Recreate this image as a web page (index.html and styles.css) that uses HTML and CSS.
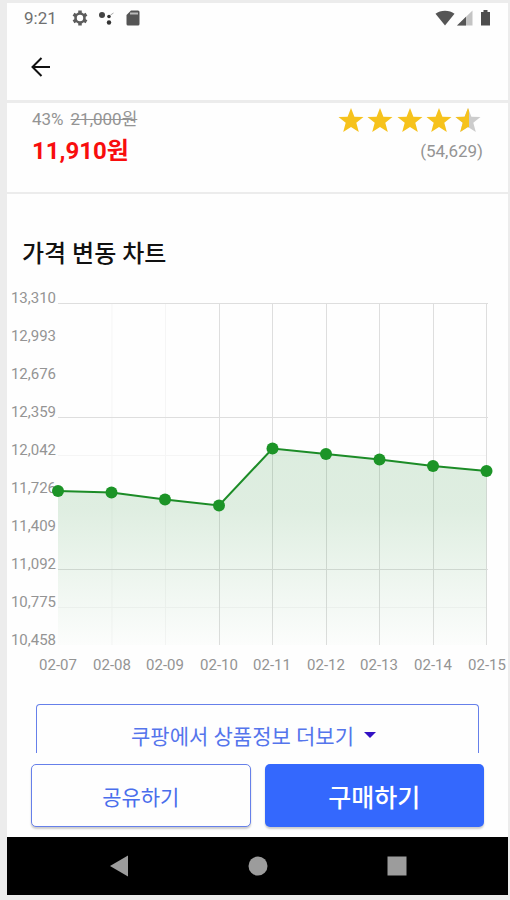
FILE: index.html
```html
<!DOCTYPE html>
<html lang="ko">
  <head>
    <meta charset="utf-8">
    <meta name="viewport" content="width=device-width, initial-scale=1">
    <title>가격 변동 차트</title>
    <link rel="stylesheet" href="styles.css">
  </head>
  <body>
    <div class="screen">
      <div class="status-bar">
        <span>9:21</span>
        <svg class="status-gear" width="18" height="18" viewBox="0 0 18 18">
          <path d="M9 1.500v3M9 13.500v3M2.500 5.250l2.600 1.500M12.900 11.250l2.600 1.500M2.500 12.750l2.600-1.500M12.900 6.750l2.600-1.500" stroke="#5c5c5c" stroke-width="3.500" />
          <circle cx="9" cy="9" r="4.500" fill="#fff" stroke="#5c5c5c" stroke-width="2.600" />
        </svg>
        <svg class="status-dots" width="18" height="18" viewBox="0 0 18 18">
          <circle cx="5" cy="6" r="3" fill="#444" />
          <circle cx="12" cy="7.500" r="1.800" fill="#333" />
          <circle cx="12" cy="13.500" r="2.200" fill="#333" />
          <path d="M13.500 6l3-2" stroke="#aaa" />
        </svg>
        <svg class="status-card" width="14" height="18" viewBox="0 0 14 18">
          <path d="M5 1.500h7A1.500 1.500 0 0 1 13.500 3v12a1.500 1.500 0 0 1-1.500 1.500H2A1.500 1.500 0 0 1 .5 15V6z" fill="#555" />
          <path d="M4 4.500h8" stroke="#bbb" stroke-width="2" />
        </svg>
        <svg class="status-right" width="56" height="18" viewBox="0 0 56 18">
          <path d="M10 16.500L.5 4.800C5.500.8 14.500.8 19.500 4.800z" fill="#555" />
          <path d="M37.500 1.500v15H22z" fill="#c4c4c4" />
          <path d="M31 7.800v8.700h-9z" fill="#555" />
          <path d="M48.500 1h4v2H55v13.500h-9V3h2.500z" fill="#4d4d4d" />
        </svg>
      </div>

      <header class="app-bar">
        <button class="back-button" type="button" aria-label="뒤로">
          <svg width="22" height="22" viewBox="0 0 22 22">
            <path d="M20 11H3M11.500 2L2.500 11l9 9" fill="none" stroke="#111" stroke-width="2" />
          </svg>
        </button>
      </header>

      <main class="content">
        <section class="summary">
          <div class="price">
            <div class="price-before"><span>43%</span><del>21,000원</del></div>
            <div class="price-now">11,910원</div>
          </div>
          <div class="rating">
            <svg class="stars" width="145" height="27" viewBox="0 0 145 27">
              <defs>
                <path id="star" d="M13 1l3.400 8.700 9.100.4-7.200 5.700 2.500 9.200L13 19.900l-7.800 5.100 2.500-9.200L.5 10.100l9.100-.4z" />
                <clipPath id="half"><rect width="14" height="27" /></clipPath>
              </defs>
              <g fill="#f6c21c">
                <use href="#star" />
                <use href="#star" x="29" />
                <use href="#star" x="59" />
                <use href="#star" x="88" />
              </g>
              <g transform="translate(117 0)">
                <use href="#star" fill="#ccc" />
                <use href="#star" fill="#f6c21c" clip-path="url(#half)" />
              </g>
            </svg>
            <div class="rating-count">(54,629)</div>
          </div>
        </section>

        <section class="chart-section">
          <h2 class="chart-title">가격 변동 차트</h2>
          <svg class="chart" viewBox="0 0 501 390">
            <defs>
              <linearGradient id="area" x1="0" y1="0" x2="0" y2="1">
                <stop offset="0" stop-color="#1e8a2e" stop-opacity="0.15" />
                <stop offset="0.3" stop-color="#1e8a2e" stop-opacity="0.14" />
                <stop offset="1" stop-color="#1e8a2e" stop-opacity="0.01" />
              </linearGradient>
            </defs>
            <g class="grid-faint">
              <path d="M51 171.500H480M51 323.500H480M105 19V361M158.500 19V361" />
            </g>
            <g class="grid">
              <path d="M51 19.500H481M51 133.500H481M51 285.500H481" />
              <path d="M212.500 19V361M265.500 19V361M319.500 19V361M372.500 19V361M426.500 19V361M479.500 19V361" />
            </g>
            <g class="axis-y">
              <text x="49" y="19">13,310</text>
              <text x="49" y="57">12,993</text>
              <text x="49" y="95">12,676</text>
              <text x="49" y="133">12,359</text>
              <text x="49" y="171">12,042</text>
              <text x="49" y="209">11,726</text>
              <text x="49" y="247">11,409</text>
              <text x="49" y="285">11,092</text>
              <text x="49" y="323">10,775</text>
              <text x="49" y="361">10,458</text>
            </g>
            <path fill="url(#area)" d="M51 207L104.500 208.500 158 215.500 212 221.500 265.500 164.500 319 170 372.500 175.500 426 182 479.500 187V361H51z" />
            <polyline class="line" points="51,207 104.500,208.500 158,215.500 212,221.500 265.500,164.500 319,170 372.500,175.500 426,182 479.500,187" />
            <g fill="#1c9427">
              <circle cx="51" cy="207" r="6" />
              <circle cx="104.500" cy="208.500" r="6" />
              <circle cx="158" cy="215.500" r="6" />
              <circle cx="212" cy="221.500" r="6" />
              <circle cx="265.500" cy="164.500" r="6" />
              <circle cx="319" cy="170" r="6" />
              <circle cx="372.500" cy="175.500" r="6" />
              <circle cx="426" cy="182" r="6" />
              <circle cx="479.500" cy="187" r="6" />
            </g>
            <g class="axis-x">
              <text x="51" y="386">02-07</text>
              <text x="105" y="386">02-08</text>
              <text x="158" y="386">02-09</text>
              <text x="212" y="386">02-10</text>
              <text x="265" y="386">02-11</text>
              <text x="319" y="386">02-12</text>
              <text x="372" y="386">02-13</text>
              <text x="426" y="386">02-14</text>
              <text x="480" y="386">02-15</text>
            </g>
          </svg>
        </section>

        <button class="more-button" type="button">
          쿠팡에서 상품정보 더보기
          <svg width="12" height="6" viewBox="0 0 12 6"><path d="M0 0h12L6 6z" fill="#3311c4" /></svg>
        </button>
      </main>

      <footer class="actions">
        <button class="action share" type="button">공유하기</button>
        <button class="action buy" type="button">구매하기</button>
      </footer>

      <nav class="nav-bar">
        <button type="button" aria-label="뒤로"><svg width="20" height="22" viewBox="0 0 20 22"><path d="M19 .5v21L1 11z" /></svg></button>
        <button type="button" aria-label="홈"><svg width="20" height="20" viewBox="0 0 20 20"><circle cx="10" cy="10" r="9.500" /></svg></button>
        <button type="button" aria-label="최근 앱"><svg width="20" height="20" viewBox="0 0 20 20"><path d="M.5.5h19v19H.5z" /></svg></button>
      </nav>
    </div>
  </body>
</html>
```
FILE: styles.css
```css
* {
  box-sizing: border-box;
}

body {
  margin: 0;
  background-color: #ececec;
  font-family: Roboto, "Noto Sans CJK KR", sans-serif;
}

button {
  padding: 0;
  border: none;
  background: none;
  font-family: inherit;
}

svg {
  display: block;
}

.screen {
  display: flex;
  flex-direction: column;
  height: calc(100vh - 8px);
  margin: 3px 2px 5px 7px;
  background-color: #fefefe;
}

.status-bar {
  display: flex;
  align-items: center;
  height: 30px;
  padding: 0 17px;
  font-size: 17px;
  color: #707070;
}

.status-gear {
  margin-left: 14px;
}

.status-dots {
  margin-left: 8px;
}

.status-card {
  margin-left: 11px;
}

.status-right {
  margin-left: auto;
}

.app-bar {
  display: flex;
  align-items: center;
  height: 70px;
  padding: 0 23px;
  border-bottom: 3px solid #ececec;
}

.content {
  flex: 1;
  min-height: 0;
  overflow: hidden;
}

.summary {
  display: flex;
  justify-content: space-between;
  height: 91px;
  padding: 4px 25px;
  border-bottom: 2px solid #ececec;
}

.price-before {
  display: flex;
  gap: 7px;
  font-size: 17px;
  line-height: 24px;
  color: #949494;
}

.price-now {
  font-size: 24px;
  font-weight: bold;
  line-height: 40px;
  color: #f80d0d;
}

.rating {
  display: flex;
  flex-direction: column;
  align-items: flex-end;
}

.rating-count {
  font-size: 17px;
  line-height: 34px;
  color: #949494;
}

.chart-title {
  margin: 0;
  padding: 42px 15px 12px;
  font-size: 24px;
  font-weight: 500;
  line-height: 36px;
  color: #111;
}

.chart {
  width: 100%;
}

.chart text {
  font-size: 15px;
  fill: #949494;
}

.axis-y {
  text-anchor: end;
}

.axis-x {
  text-anchor: middle;
}

.grid {
  stroke: #dedede;
}

.grid-faint {
  stroke: #f5f5f5;
}

.line {
  fill: none;
  stroke: #1c8c27;
  stroke-width: 2;
}

.more-button {
  display: flex;
  justify-content: center;
  align-items: center;
  gap: 10px;
  width: calc(100% - 58px);
  height: 60px;
  margin: 30px 29px 0;
  padding-right: 8px;
  border: 1px solid #6680ea;
  border-bottom: none;
  border-radius: 4px 4px 0 0;
  font-size: 21px;
  color: #5575ec;
}

.actions {
  display: flex;
  gap: 14px;
  padding: 11px 24px 10px;
  background-color: #fefefe;
}

.action {
  width: 50%;
  height: 63px;
  border-radius: 5px;
  box-shadow: 0 2px 2px rgba(0, 0, 0, 0.2);
}

.share {
  border: 1px solid #6680ea;
  background-color: #fefefe;
  font-size: 21px;
  color: #4a6eec;
}

.buy {
  background-color: #3468fd;
  font-size: 25px;
  font-weight: 500;
  color: #fff;
}

.nav-bar {
  display: flex;
  justify-content: center;
  gap: 119px;
  height: 58px;
  background-color: #000;
}

.nav-bar svg {
  fill: #9c9c9c;
}
```
